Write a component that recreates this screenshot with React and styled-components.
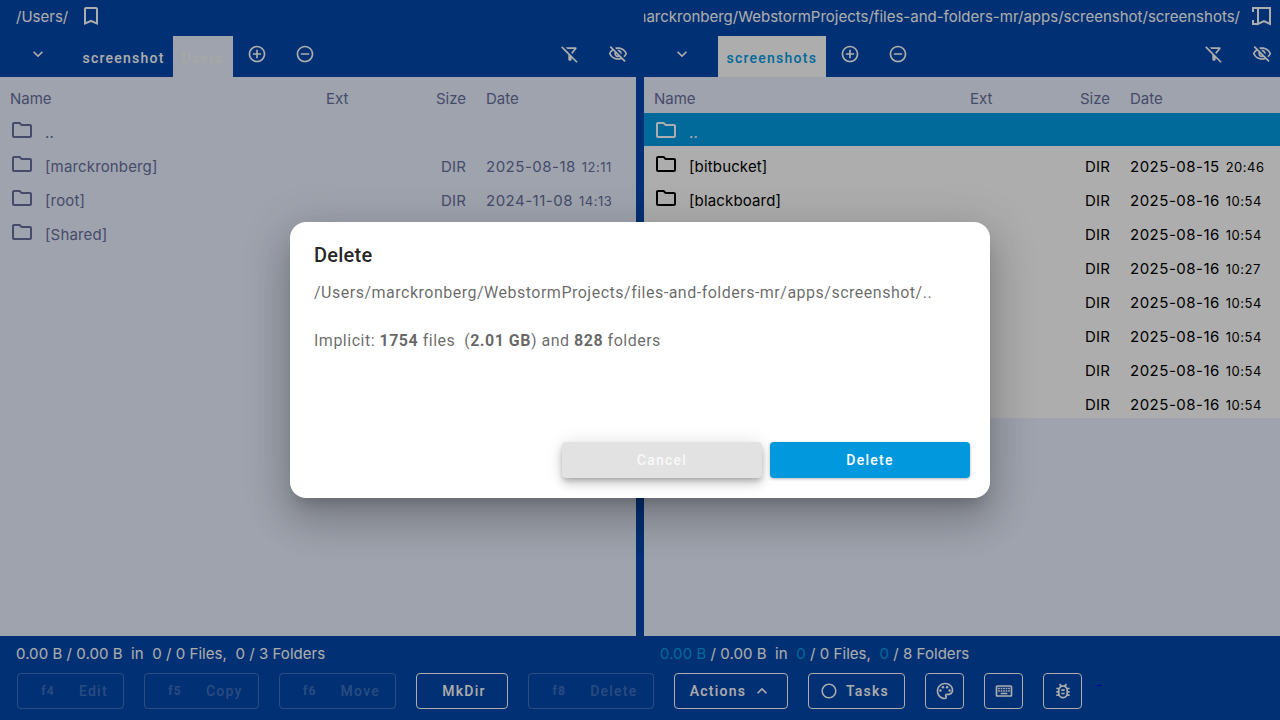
import React from 'react'
import styled, { createGlobalStyle } from 'styled-components'
import {
  MdKeyboardArrowDown,
  MdExpandLess,
  MdOutlineAddCircleOutline,
  MdOutlineRemoveCircleOutline,
  MdOutlineBookmarkBorder,
  MdOutlineFilterAltOff,
  MdOutlineVisibilityOff,
  MdOutlineFolder,
  MdOutlinePalette,
  MdOutlineKeyboard,
  MdOutlineBugReport,
  MdRadioButtonUnchecked,
} from 'react-icons/md'

const GlobalStyle = createGlobalStyle`
  html, body {
    margin: 0;
    height: 100%;
    overflow: hidden;
  }
  body {
    font-family: Inter, Roboto, sans-serif;
    font-size: 15px;
  }
`

const Page = styled.div`
  position: relative;
  width: 1280px;
  height: 720px;
  background: #0447ab;
  color: #fff;
  display: flex;
  flex-direction: column;
  overflow: hidden;
`

const Panes = styled.div`
  display: grid;
  grid-template-columns: 636px 636px;
  column-gap: 8px;
  height: 636px;
`

const Pane = styled.section`
  display: flex;
  flex-direction: column;
  min-width: 0;
`

const PathBar = styled.div`
  height: 36px;
  display: flex;
  align-items: center;
  padding: 0 5px 4px ${(p) => (p.$end ? 0 : 16)}px;
  box-sizing: border-box;
  gap: 11px;
  justify-content: ${(p) => (p.$end ? 'flex-end' : 'flex-start')};
  svg {
    flex: none;
  }
`

const PathText = styled.div`
  line-height: 20px;
  white-space: nowrap;
  min-width: 0;
  overflow: hidden;
  display: flex;
  justify-content: flex-end;
  padding-top: 1px;
`

const PathInner = styled.span`
  flex: none;
`

const TabBar = styled.div`
  height: 41px;
  display: flex;
  align-items: stretch;
`

const Chevron = styled.div`
  width: 72px;
  display: flex;
  justify-content: center;
  padding: 8px 0 0 2px;
  flex: none;
`

const Tab = styled.div`
  display: flex;
  align-items: center;
  justify-content: center;
  padding: 3px 8.5px 0;
  font-family: Roboto, sans-serif;
  font-size: 14px;
  font-weight: 500;
  letter-spacing: 1.25px;
  color: ${(p) => p.$color || '#fff'};
  background: ${(p) => p.$bg || 'transparent'};
`

const TabIcon = styled.div`
  width: 48px;
  display: flex;
  justify-content: center;
  padding-top: 8px;
  box-sizing: border-box;
  flex: none;
`

const Spacer = styled.div`
  flex: 1;
`

const RightIcons = styled.div`
  display: flex;
  margin-right: -6px;
`

const Content = styled.div`
  flex: 1;
  background: #ebf1ff;
`

const HeaderRow = styled.div`
  display: grid;
  grid-template-columns: 316px 90px 50px 1fr;
  height: 36px;
  padding: 6px 0 0 10px;
  align-items: center;
  color: #676f9e;
  box-sizing: border-box;
`

const SizeHead = styled.div`
  text-align: right;
`

const DateHead = styled.div`
  padding-left: 20px;
`

const rowBackground = (p) => {
  if (p.$selected) return '#039be5'
  return p.$dim ? 'transparent' : '#fff'
}

const Row = styled.div`
  display: grid;
  grid-template-columns: 35px 281px 90px 50px 1fr;
  height: ${(p) => (p.$first ? 33 : 34)}px;
  padding-left: 10px;
  align-items: center;
  box-sizing: border-box;
  background: ${rowBackground};
  color: ${(p) => (p.$selected ? '#fff' : p.$dim ? '#676f9e' : '#000')};
  white-space: nowrap;
  letter-spacing: 0.15px;
`

const FolderCell = styled.div`
  height: 24px;
  display: flex;
  margin-top: ${(p) => (p.$first ? 0 : 2)}px;
  svg {
    display: block;
  }
`

const NameCell = styled.div`
  padding-top: 6px;
`

const DirCell = styled.div`
  padding-top: 6px;
  text-align: right;
`

const DateCell = styled.div`
  padding-top: 6px;
  padding-left: 20px;
  letter-spacing: 0.5px;
`

const Time = styled.span`
  font-size: 13px;
  margin-left: 6px;
`

const Footer = styled.footer`
  flex: 1;
  display: flex;
  flex-direction: column;
`

const Stats = styled.div`
  display: grid;
  grid-template-columns: 644px 1fr;
  padding: 0 0 2px 16px;
  height: 37px;
  align-items: center;
  box-sizing: border-box;
  letter-spacing: 0.05px;
`

const Stat = styled.div`
  white-space: pre;
`

const Mark = styled.span`
  color: #039be5;
`

const Buttons = styled.div`
  display: flex;
  align-items: flex-start;
  gap: 20px;
  padding-left: 17px;
`

const Btn = styled.div`
  height: 36px;
  width: ${(p) => p.$w}px;
  box-sizing: border-box;
  border-radius: 4px;
  border: 1px solid ${(p) => (p.$off ? 'rgba(255,255,255,.24)' : '#fff')};
  color: ${(p) => (p.$off ? 'rgba(255,255,255,.24)' : '#fff')};
  display: flex;
  align-items: center;
  justify-content: center;
  gap: ${(p) => p.$gap || 0}px;
  padding-left: ${(p) => p.$pl || 0}px;
  padding-right: ${(p) => p.$pr || 0}px;
  font-family: Roboto, sans-serif;
  font-size: 14px;
  font-weight: 500;
  letter-spacing: 1.25px;
`

const Fkey = styled.span`
  font-size: 12px;
  font-weight: 700;
`

const TinyLink = styled.a`
  font-size: 16px;
  line-height: 16px;
  margin: -3px 0 0 -5px;
`

const Backdrop = styled.div`
  position: absolute;
  inset: 0;
  background: rgba(0, 0, 0, 0.32);
  display: flex;
  align-items: center;
  justify-content: center;
`

const Dialog = styled.div`
  width: 700px;
  height: 276px;
  box-sizing: border-box;
  background: #fff;
  border-radius: 16px;
  display: flex;
  flex-direction: column;
  font-family: Roboto, sans-serif;
  color: rgba(0, 0, 0, 0.6);
  box-shadow: 0 11px 15px -7px rgba(0, 0, 0, 0.2), 0 24px 38px 3px rgba(0, 0, 0, 0.14),
    0 9px 46px 8px rgba(0, 0, 0, 0.12);
`

const DialogTitle = styled.h2`
  margin: 0;
  padding: 20px 24px 0;
  font-size: 20px;
  line-height: 26px;
  font-weight: 500;
  letter-spacing: 0.25px;
  color: rgba(0, 0, 0, 0.87);
`

const DialogBody = styled.div`
  flex: 1;
  padding: 13px 24px 0;
  font-size: 16px;
  line-height: 24px;
  letter-spacing: 0.5px;
`

const Implicit = styled.div`
  margin-top: 24px;
  white-space: pre;
  b {
    font-weight: 700;
  }
`

const DialogActions = styled.div`
  display: flex;
  justify-content: flex-end;
  gap: 8px;
  padding: 0 20px 20px;
`

const DialogBtn = styled.div`
  width: 200px;
  height: 36px;
  border-radius: 4px;
  display: flex;
  align-items: center;
  justify-content: center;
  font-size: 14px;
  font-weight: 500;
  letter-spacing: 1.25px;
  color: ${(p) => (p.$primary ? '#fff' : 'rgba(255,255,255,.8)')};
  background: ${(p) => (p.$primary ? '#0298dd' : '#e2e2e2')};
  box-shadow: ${(p) =>
    p.$primary
      ? '0 1px 3px rgba(0,0,0,.3)'
      : '0 3px 5px -1px rgba(0,0,0,.2), 0 6px 10px rgba(0,0,0,.14), 0 1px 18px rgba(0,0,0,.12)'};
`

const leftRows = [
  ['[marckronberg]', '2025-08-18', '12:11'],
  ['[root]', '2024-11-08', '14:13'],
  ['[Shared]', '', ''],
]

const rightRows = [
  ['[bitbucket]', '2025-08-15', '20:46'],
  ['[blackboard]', '2025-08-16', '10:54'],
  ['', '2025-08-16', '10:54'],
  ['', '2025-08-16', '10:27'],
  ['', '2025-08-16', '10:54'],
  ['', '2025-08-16', '10:54'],
  ['', '2025-08-16', '10:54'],
  ['', '2025-08-16', '10:54'],
]

function FramedBookmark() {
  return (
    <svg width="24" height="24" viewBox="0 0 24 24" fill="none" stroke="currentColor" strokeWidth="2">
      <path d="M7 4H19V20L13 17L7 20Z" />
      <path d="M7 4H2V8M7 20H2V16" />
    </svg>
  )
}

function Header() {
  return (
    <HeaderRow>
      <div>Name</div>
      <div>Ext</div>
      <SizeHead>Size</SizeHead>
      <DateHead>Date</DateHead>
    </HeaderRow>
  )
}

function FileRow({ name, date, time, dim, selected, first, up }) {
  return (
    <Row $dim={dim} $selected={selected} $first={first}>
      <FolderCell $first={first}>
        <MdOutlineFolder size={24} />
      </FolderCell>
      <NameCell>{name}</NameCell>
      <div />
      <DirCell>{up ? '' : 'DIR'}</DirCell>
      <DateCell>
        {date}
        {time && <Time>{time}</Time>}
      </DateCell>
    </Row>
  )
}

function TabRow({ tabs }) {
  return (
    <TabBar>
      <Chevron>
        <MdKeyboardArrowDown size={20} />
      </Chevron>
      {tabs}
      <TabIcon>
        <MdOutlineAddCircleOutline size={20} />
      </TabIcon>
      <TabIcon>
        <MdOutlineRemoveCircleOutline size={20} />
      </TabIcon>
      <Spacer />
      <RightIcons>
        <TabIcon>
          <MdOutlineFilterAltOff size={20} />
        </TabIcon>
        <TabIcon>
          <MdOutlineVisibilityOff size={20} />
        </TabIcon>
      </RightIcons>
    </TabBar>
  )
}

export default function App() {
  return (
    <Page>
      <GlobalStyle />
      <Panes>
        <Pane>
          <PathBar>
            <PathText>
              <PathInner>/Users/</PathInner>
            </PathText>
            <MdOutlineBookmarkBorder size={24} />
          </PathBar>
          <TabRow
            tabs={
              <>
                <Tab>screenshot</Tab>
                <Tab $bg="#ebf1ff" $color="#f7f7f7">
                  Users
                </Tab>
              </>
            }
          />
          <Content>
            <Header />
            <FileRow name=".." dim first up />
            {leftRows.map(([name, date, time]) => (
              <FileRow key={name} name={name} date={date} time={time} dim up={name === '[Shared]'} />
            ))}
          </Content>
        </Pane>
        <Pane>
          <PathBar $end>
            <PathText>
              <PathInner>/Users/marckronberg/WebstormProjects/files-and-folders-mr/apps/screenshot/screenshots/</PathInner>
            </PathText>
            <FramedBookmark />
          </PathBar>
          <TabRow
            tabs={
              <Tab $bg="#fff" $color="#039be5">
                screenshots
              </Tab>
            }
          />
          <Content>
            <Header />
            <FileRow name=".." selected first up />
            {rightRows.map(([name, date, time], i) => (
              <FileRow key={i} name={name} date={date} time={time} />
            ))}
          </Content>
        </Pane>
      </Panes>
      <Footer>
        <Stats>
          <Stat>0.00 B / 0.00 B  in  0 / 0 Files,  0 / 3 Folders</Stat>
          <Stat>
            <Mark>0.00 B</Mark> / 0.00 B  in  <Mark>0</Mark> / 0 Files,  <Mark>0</Mark> / 8 Folders
          </Stat>
        </Stats>
        <Buttons>
          <Btn $off $w={107} $gap={24} $pl={8}>
            <Fkey>f4</Fkey>Edit
          </Btn>
          <Btn $off $w={115} $gap={24} $pl={8}>
            <Fkey>f5</Fkey>Copy
          </Btn>
          <Btn $off $w={117} $gap={24} $pl={8}>
            <Fkey>f6</Fkey>Move
          </Btn>
          <Btn $w={92} $pl={4}>
            MkDir
          </Btn>
          <Btn $off $w={126} $gap={24} $pl={8}>
            <Fkey>f8</Fkey>Delete
          </Btn>
          <Btn $w={114} $gap={6}>
            Actions
            <MdExpandLess size={20} />
          </Btn>
          <Btn $w={97} $gap={8} $pr={4}>
            <MdRadioButtonUnchecked size={18} />
            Tasks
          </Btn>
          <Btn $w={39}>
            <MdOutlinePalette size={20} />
          </Btn>
          <Btn $w={39}>
            <MdOutlineKeyboard size={20} />
          </Btn>
          <Btn $w={39}>
            <MdOutlineBugReport size={20} />
          </Btn>
          <TinyLink href="#">&nbsp;</TinyLink>
        </Buttons>
      </Footer>
      <Backdrop>
        <Dialog>
          <DialogTitle>Delete</DialogTitle>
          <DialogBody>
            <div>/Users/marckronberg/WebstormProjects/files-and-folders-mr/apps/screenshot/..</div>
            <Implicit>
              Implicit: <b>1754</b> files  (<b>2.01 GB</b>) and <b>828</b> folders
            </Implicit>
          </DialogBody>
          <DialogActions>
            <DialogBtn>Cancel</DialogBtn>
            <DialogBtn $primary>Delete</DialogBtn>
          </DialogActions>
        </Dialog>
      </Backdrop>
    </Page>
  )
}
